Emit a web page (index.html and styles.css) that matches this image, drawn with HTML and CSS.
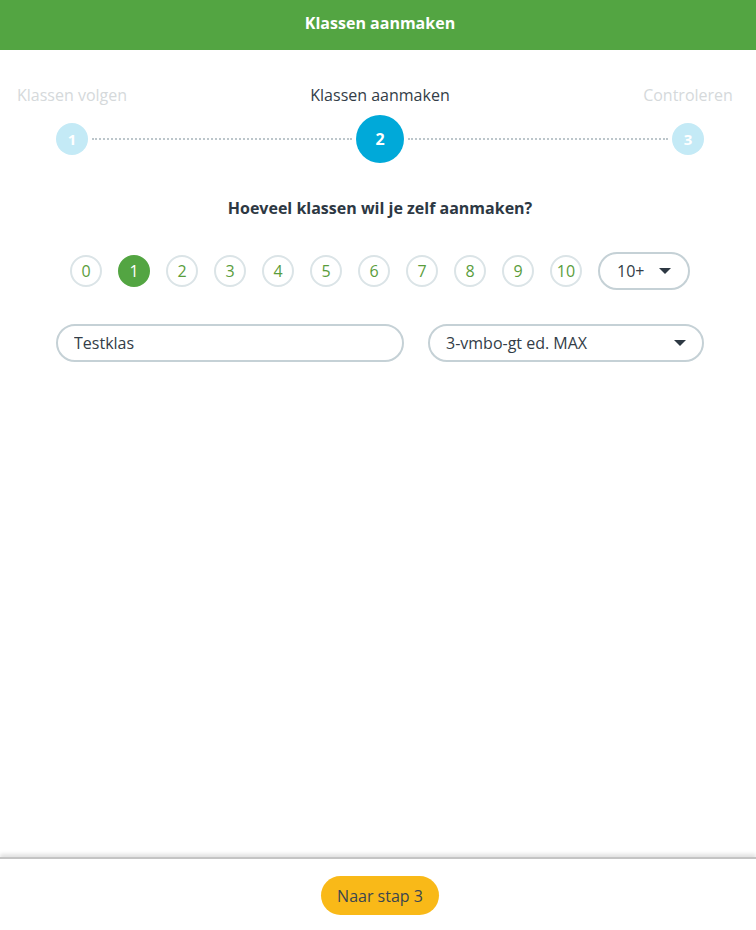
FILE: index.html
```html
<!DOCTYPE html>
<html lang="nl">
<head>
    <meta charset="UTF-8">
    <meta name="viewport" content="width=device-width, initial-scale=1.0">
    <title>Klassen aanmaken</title>
    <link rel="stylesheet" href="styles.css">
</head>
<body>
    <header class="topbar">Klassen aanmaken</header>

    <div class="container">
        <div class="stepper">
            <div class="step">
                <span class="step-label">Klassen volgen</span>
                <span class="step-dot">1</span>
            </div>
            <div class="step-line"></div>
            <div class="step active">
                <span class="step-label">Klassen aanmaken</span>
                <span class="step-dot">2</span>
            </div>
            <div class="step-line"></div>
            <div class="step">
                <span class="step-label">Controleren</span>
                <span class="step-dot">3</span>
            </div>
        </div>

        <h2 class="question">Hoeveel klassen wil je zelf aanmaken?</h2>

        <div class="count-row">
            <button class="count">0</button>
            <button class="count selected">1</button>
            <button class="count">2</button>
            <button class="count">3</button>
            <button class="count">4</button>
            <button class="count">5</button>
            <button class="count">6</button>
            <button class="count">7</button>
            <button class="count">8</button>
            <button class="count">9</button>
            <button class="count">10</button>
            <div class="pill-select more">
                <span>10+</span>
                <span class="caret"></span>
            </div>
        </div>

        <div class="class-row">
            <input type="text" class="pill-input" value="Testklas">
            <div class="pill-select method">
                <span>3-vmbo-gt ed. MAX</span>
                <span class="caret"></span>
            </div>
        </div>
    </div>

    <footer class="bottombar">
        <button class="next">Naar stap 3</button>
    </footer>
</body>
</html>
```

FILE: styles.css
```css
body {
    margin: 0;
    font-family: "Open Sans", Arial, sans-serif;
    color: #333d47;
    background-color: #fff;
}
.topbar {
    height: 50px;
    line-height: 46px;
    padding-left: 4px;
    background-color: #53a542;
    color: #fff;
    font-size: 16px;
    font-weight: 700;
    text-align: center;
}
.container {
    width: 648px;
    margin-left: 56px;
}

/* stepper */
.stepper {
    display: flex;
    align-items: flex-end;
    margin-top: 35px;
}
.step {
    display: flex;
    flex-direction: column;
    align-items: center;
    width: 32px;
}
.step-label {
    height: 20px;
    line-height: 20px;
    font-size: 16px;
    white-space: nowrap;
    color: #d5d9db;
    margin-bottom: 18px;
}
.step-dot {
    width: 32px;
    height: 32px;
    line-height: 32px;
    border-radius: 50%;
    background-color: #c4eaf6;
    color: #fff;
    font-size: 15px;
    font-weight: 700;
    text-align: center;
    margin-bottom: 8px;
}
.step.active {
    width: 48px;
}
.step.active .step-label {
    color: #333d47;
    margin-bottom: 10px;
}
.step.active .step-dot {
    width: 48px;
    height: 48px;
    line-height: 48px;
    background-color: #00a9d9;
    font-size: 16px;
    margin-bottom: 0;
}
.step-line {
    flex: 1;
    height: 0;
    border-top: 2px dotted #bcc6cb;
    margin: 0 4px 23px;
}

.question {
    margin: 33px 0 0;
    font-size: 16px;
    line-height: 24px;
    font-weight: 700;
    text-align: center;
    color: #2d3843;
}

/* number picker */
.count-row {
    display: flex;
    align-items: center;
    justify-content: center;
    gap: 16px;
    margin-top: 32px;
    height: 38px;
}
.count {
    width: 32px;
    height: 32px;
    padding: 0;
    border: 2px solid #dbe4e7;
    border-radius: 50%;
    background-color: #fff;
    color: #5a9d3c;
    font-family: "Open Sans", Arial, sans-serif;
    font-size: 16px;
    cursor: pointer;
}
.count.selected {
    background-color: #53a542;
    border-color: #53a542;
    color: #fff;
}

.pill-select {
    display: flex;
    align-items: center;
    justify-content: space-between;
    box-sizing: border-box;
    height: 38px;
    border: 2px solid #c5d1d6;
    border-radius: 19px;
    font-size: 16px;
    color: #333d47;
}
.pill-select.more {
    width: 92px;
    padding: 0 17px 0 17px;
}
.pill-select.method {
    flex: 1;
    padding: 0 16px 0 16px;
}
.caret {
    width: 0;
    height: 0;
    border-left: 6px solid transparent;
    border-right: 6px solid transparent;
    border-top: 6px solid #2d3843;
}

.class-row {
    display: flex;
    gap: 24px;
    margin-top: 34px;
}
.pill-input {
    width: 348px;
    height: 38px;
    box-sizing: border-box;
    padding: 0 16px;
    border: 2px solid #c5d1d6;
    border-radius: 19px;
    font-family: "Open Sans", Arial, sans-serif;
    font-size: 16px;
    color: #333d47;
    outline: none;
}

/* footer */
.bottombar {
    position: fixed;
    left: 0;
    right: 0;
    bottom: 0;
    height: 71px;
    padding-left: 4px;
    background-color: #fff;
    border-top: 2px solid #c4c4c4;
    box-shadow: 0 -3px 4px rgba(0, 0, 0, 0.12);
    display: flex;
    justify-content: center;
    align-items: flex-start;
}
.next {
    margin-top: 17px;
    height: 39px;
    padding: 0 16px;
    border: none;
    border-radius: 20px;
    background-color: #f9b918;
    color: #3b4650;
    font-family: "Open Sans", Arial, sans-serif;
    font-size: 16px;
    cursor: pointer;
}
```
